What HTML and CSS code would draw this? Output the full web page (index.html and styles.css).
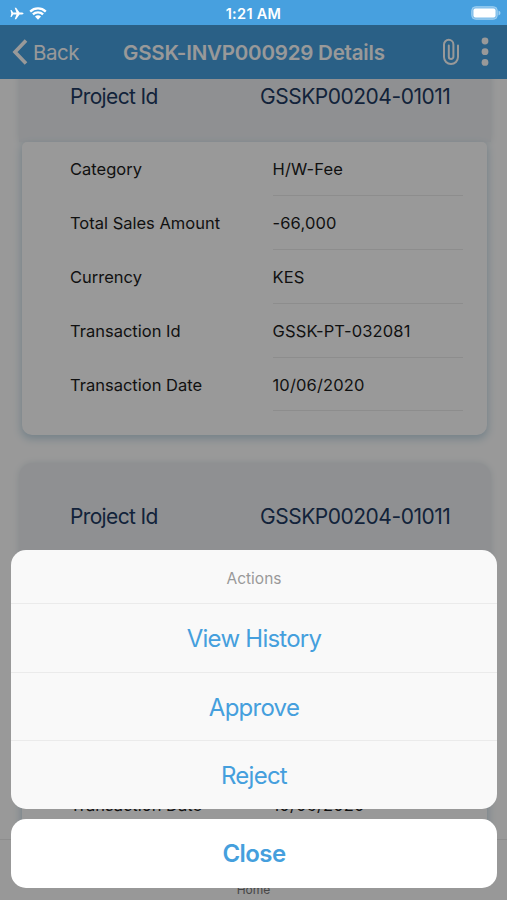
FILE: index.html
```html
<!DOCTYPE html>
<html lang="en">
<head>
<meta charset="utf-8">
<title>GSSK-INVP000929 Details</title>
<link rel="stylesheet" href="styles.css">
</head>
<body>
<div class="screen">
  <header class="status">
    <div class="signals">
      <svg class="plane" viewBox="0 0 14 13"><path d="M.5 3h1l1.700 2.500h3.300L4.700.7h1.400l3.500 4.800h2.500q1.500.3 1.500 1t-1.500 1H9.600l-3.500 4.800H4.700l1.800-4.800H3.200L1.500 10h-1l.8-3.500z"/></svg>
      <svg class="wifi" viewBox="0 0 18 13"><path d="M1.200 4.600a11.200 11.200 0 0 1 15.600 0M3.900 7.400a7.400 7.400 0 0 1 10.200 0"/><path class="fill" d="M6 9.600a4.400 4.400 0 0 1 6 0l-3 3.100z"/></svg>
    </div>
    <span class="time">1:21 AM</span>
    <svg class="battery" viewBox="0 0 31 14"><rect class="case" x=".75" y=".75" width="25.500" height="12.500" rx="3.700"/><rect class="charge" x="2.500" y="2.500" width="22" height="9" rx="2"/><path class="cap" d="M27.500 4.500q2 .8 2 2.500t-2 2.500z"/></svg>
  </header>

  <nav class="navbar">
    <div class="back">
      <svg class="chevron" viewBox="0 0 16 26"><path d="M14 1.500 3 13l11 11.500"/></svg>
      <span>Back</span>
    </div>
    <h1 class="title">GSSK-INVP000929 Details</h1>
    <div class="tools">
      <svg class="clip" viewBox="0 0 18 28"><path d="M16 7.500V19a7 7 0 0 1-14 0V6.500a4.700 4.700 0 0 1 9.400 0v12.200a2.300 2.300 0 0 1-4.600 0V7.500"/></svg>
      <svg class="dots" viewBox="0 0 8 30"><circle cx="4" cy="4" r="3.400"/><circle cx="4" cy="14.700" r="3.400"/><circle cx="4" cy="25.400" r="3.400"/></svg>
    </div>
  </nav>

  <main class="content">
    <div class="cards">
      <section class="card">
        <div class="card-head"><span class="head-label">Project Id</span><span class="head-value">GSSKP00204-01011</span></div>
        <dl class="card-body">
          <div class="row"><dt>Category</dt><dd>H/W-Fee</dd></div>
          <div class="row"><dt>Total Sales Amount</dt><dd>-66,000</dd></div>
          <div class="row"><dt>Currency</dt><dd>KES</dd></div>
          <div class="row"><dt>Transaction Id</dt><dd>GSSK-PT-032081</dd></div>
          <div class="row"><dt>Transaction Date</dt><dd>10/06/2020</dd></div>
        </dl>
      </section>
      <section class="card">
        <div class="card-head"><span class="head-label">Project Id</span><span class="head-value">GSSKP00204-01011</span></div>
        <dl class="card-body">
          <div class="row"></div>
          <div class="row"></div>
          <div class="row"></div>
          <div class="row"></div>
          <div class="row"><dt>Transaction Date</dt><dd>10/06/2020</dd></div>
        </dl>
      </section>
    </div>
  </main>
  <footer class="tabbar"><span>Home</span></footer>

  <div class="overlay">
    <div class="sheet">
      <div class="sheet-title"><span>Actions</span></div>
      <div class="action"><span>View History</span></div>
      <div class="action"><span>Approve</span></div>
      <div class="action"><span>Reject</span></div>
    </div>
    <div class="close"><span>Close</span></div>
  </div>
</div>
</body>
</html>
```
FILE: styles.css
```css
* { box-sizing: border-box; }
body { margin: 0; font-family: Inter, "Liberation Sans", sans-serif; }
.screen {
  position: relative;
  width: 507px;
  height: 900px;
  overflow: hidden;
  display: flex;
  flex-direction: column;
  background: #fff;
}
.status {
  height: 25px;
  flex: none;
  padding: 2px 8px 0 10px;
  display: grid;
  grid-template-columns: 1fr auto 1fr;
  align-items: center;
  background: #47a0df;
  color: #fff;
}
.signals { display: flex; align-items: center; gap: 5px; margin-top: -1px; }
.plane { width: 14px; height: 13px; fill: #fff; }
.wifi { width: 18px; height: 13px; fill: none; stroke: #fff; stroke-width: 2.3; }
.wifi .fill { fill: #fff; stroke: none; }
.time { font-size: 14.5px; font-weight: 600; line-height: 20px; letter-spacing: 0.3px; margin-right: 2px; }
.battery { width: 31px; height: 14px; justify-self: end; margin: -2px -3px 0 0; fill: #fff; }
.battery .case { fill: #81beea; stroke: #9fd0f1; stroke-width: 1; }
.battery .cap { fill: #9fd0f1; }

.navbar {
  height: 54px;
  flex: none;
  padding: 0 18px 0 12px;
  display: grid;
  grid-template-columns: 111px 1fr auto;
  align-items: center;
  background: #47a0df;
  color: #fff;
}
.back { display: flex; align-items: center; gap: 5px; font-size: 20.5px; letter-spacing: -0.5px; }
.chevron { width: 16px; height: 26px; fill: none; stroke: #fff; stroke-width: 3.6; }
.title { margin: 0; font-size: 20.5px; font-weight: 600; line-height: 30px; letter-spacing: -0.2px; white-space: nowrap; padding-top: 1px; }
.tools { display: flex; align-items: center; justify-content: flex-end; gap: 21px; }
.clip { width: 18px; height: 28px; fill: none; stroke: #fff; stroke-width: 2; stroke-linecap: round; }
.dots { width: 8px; height: 30px; fill: #fff; }

.content { flex: 1; min-height: 0; overflow: hidden; padding: 0 16px 0 19px; }
.cards { display: flex; flex-direction: column; gap: 28px; margin-top: -36px; }
.card { border-radius: 12px; }
.card-head {
  height: 99px;
  padding: 7px 0 0 51px;
  display: grid;
  grid-template-columns: 190px 1fr;
  align-items: center;
  font-size: 21px;
  color: #203a62;
  border-radius: 14px 14px 0 0;
  background: #eff1f4;
  box-shadow: 0 0 7px #dfe7eb;
}
.head-label { letter-spacing: -0.65px; }
.head-value { letter-spacing: -0.48px; }
.card-body {
  height: 293px;
  margin: 0 4px 0 3px;
  padding: 0 24px 0 48px;
  border-radius: 5px 5px 10px 10px;
  background: #fff;
  box-shadow: 0 3px 8px 1px #c3d9e5;
  font-size: 16.5px;
  color: #1c1c1c;
}
.row { height: 53.9px; display: grid; grid-template-columns: 202.5px 1fr; align-items: stretch; }
.row dt, .row dd { margin: 0; line-height: 54.6px; height: 53.9px; white-space: nowrap; }
.row dd { border-bottom: 1px solid #ebebeb; letter-spacing: 0.15px; }

.tabbar {
  height: 61px;
  flex: none;
  display: flex;
  justify-content: center;
  align-items: flex-end;
  padding-bottom: 2px;
  border-top: 1px solid #ebebeb;
  background: #fdfdfd;
  color: #777;
  font-size: 12px;
  line-height: 16px;
}

.overlay {
  position: absolute;
  inset: 25px 0 0;
  display: flex;
  flex-direction: column;
  justify-content: flex-end;
  gap: 10px;
  padding: 0 10px 12px 11px;
  background: rgba(0, 0, 0, 0.4);
}
.sheet, .close { border-radius: 15px; overflow: hidden; text-align: center; color: #459fdd; }
.sheet { height: 259px; background: #f9f9f9; }
.sheet-title { height: 53px; line-height: 57px; font-size: 15.5px; color: #999; }
.action { height: 68.6px; line-height: 70px; border-top: 1px solid #ebebeb; font-size: 24px; letter-spacing: -0.75px; }
.close { height: 69px; line-height: 70px; background: #fff; font-size: 24px; font-weight: 600; letter-spacing: -0.6px; }
```
